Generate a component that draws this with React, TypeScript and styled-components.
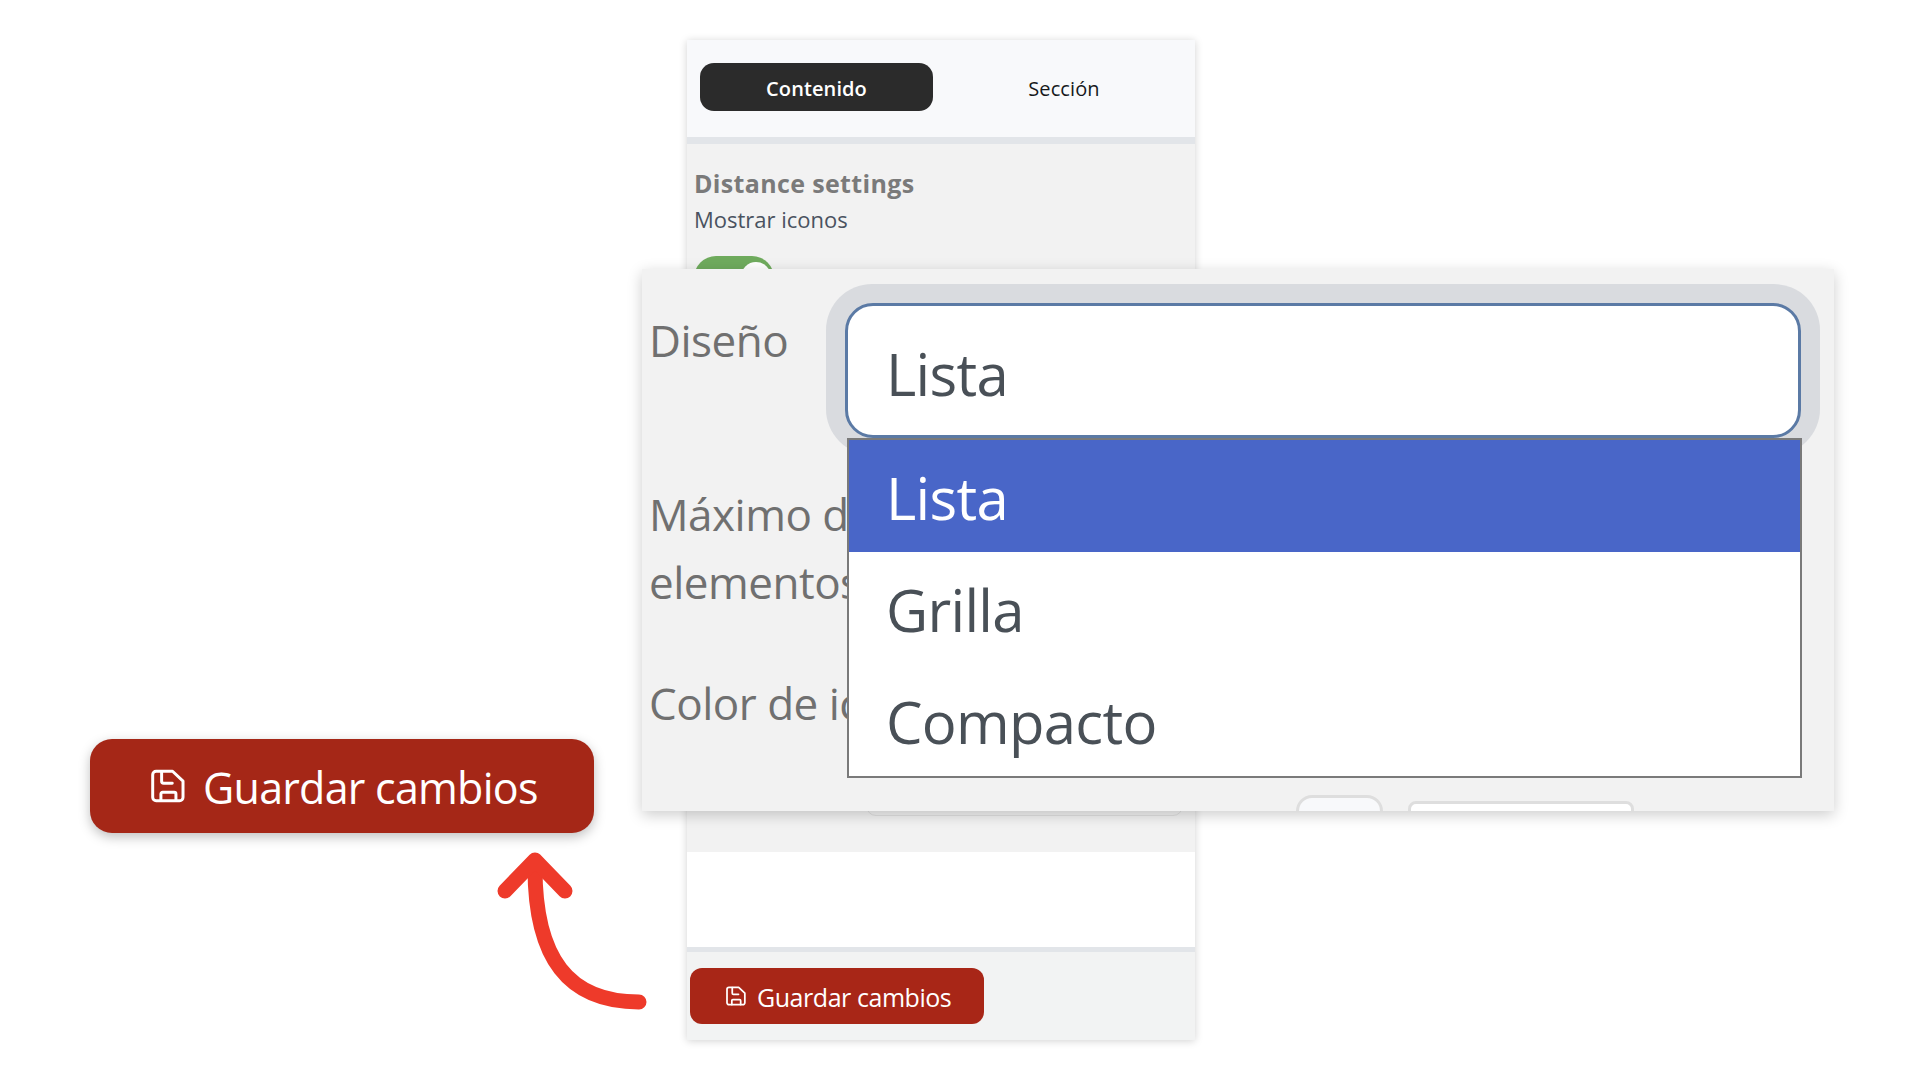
import React from 'react';
import styled, { createGlobalStyle } from 'styled-components';

const GlobalStyle = createGlobalStyle`
  html, body {
    margin: 0;
    background: #fff;
    font-family: "Open Sans", "Liberation Sans", sans-serif;
  }
`;

const Canvas = styled.div`
  position: relative;
  width: 1920px;
  height: 1080px;
  overflow: hidden;
  background: #fff;
`;

/* small sidebar at the back */
const BackPanel = styled.div`
  position: absolute;
  left: 687px;
  top: 40px;
  width: 508px;
  height: 1000px;
  display: flex;
  flex-direction: column;
  box-shadow: 0 1px 8px rgba(0, 0, 0, 0.18);
`;

const Tabs = styled.div`
  height: 104px;
  flex-shrink: 0;
  display: flex;
  align-items: center;
  padding: 0 0 3px 13px;
  box-sizing: border-box;
  background: #f8f9fb;
  border-bottom: 7px solid #e2e5e9;
`;

const Tab = styled.div<{ $active?: boolean }>`
  height: 48px;
  padding-top: 2px;
  box-sizing: border-box;
  display: flex;
  align-items: center;
  justify-content: center;
  flex: ${(p) => (p.$active ? '0 0 233px' : '1')};
  border-radius: 14px;
  font-size: 20px;
  font-weight: ${(p) => (p.$active ? 600 : 500)};
  letter-spacing: ${(p) => (p.$active ? '0.1px' : '0.1px')};
  color: ${(p) => (p.$active ? '#fff' : '#16191c')};
  background: ${(p) => (p.$active ? '#2b2b2b' : 'transparent')};
`;

const Body = styled.div`
  height: 708px;
  flex-shrink: 0;
  box-sizing: border-box;
  padding: 22px 7px 36px;
  display: flex;
  flex-direction: column;
  background: #f2f2f2;
`;

const Title = styled.div`
  font-size: 25px;
  line-height: 34px;
  font-weight: 700;
  letter-spacing: 0.35px;
  color: #7a7a7a;
`;

const Caption = styled.div`
  margin-top: 3px;
  font-size: 22px;
  line-height: 32px;
  letter-spacing: 0;
  color: #4a5260;
`;

const Toggle = styled.div`
  width: 80px;
  height: 44px;
  margin-top: 21px;
  padding: 6px 3px;
  box-sizing: border-box;
  display: flex;
  justify-content: flex-end;
  border-radius: 22px;
  background: #6fab5d;
`;

const Knob = styled.div`
  width: 30px;
  height: 30px;
  border-radius: 50%;
  background: #fff;
`;

const HiddenInput = styled.div`
  width: 317px;
  height: 40px;
  margin: auto 0 0 172px;
  box-sizing: border-box;
  border: 1px solid #e0e0e0;
  border-radius: 10px;
`;

const Blank = styled.div`
  height: 95px;
  flex-shrink: 0;
  background: #fff;
`;

const Footer = styled.div`
  flex: 1;
  display: flex;
  align-items: flex-start;
  padding: 16px 3px 0;
  background: #f2f3f3;
  border-top: 5px solid #e2e5e9;
`;

const SaveButton = styled.div<{ $big?: boolean }>`
  display: flex;
  align-items: center;
  box-sizing: border-box;
  color: #fff;
  background: ${(p) => (p.$big ? '#a52717' : '#a82617')};
  width: ${(p) => (p.$big ? '504px' : '294px')};
  height: ${(p) => (p.$big ? '94px' : '56px')};
  padding-left: ${(p) => (p.$big ? '61px' : '36px')};
  gap: ${(p) => (p.$big ? '18px' : '11px')};
  border-radius: ${(p) => (p.$big ? '22px' : '12px')};
  font-size: ${(p) => (p.$big ? '43px' : '25px')};
  letter-spacing: ${(p) => (p.$big ? '-0.75px' : '-0.45px')};
  box-shadow: ${(p) => (p.$big ? '0 4px 12px rgba(0, 0, 0, 0.25)' : 'none')};
`;

const ButtonLabel = styled.span`
  position: relative;
  top: 1px;
`;

const BigButtonSpot = styled.div`
  position: absolute;
  left: 90px;
  top: 739px;
`;

const Arrow = styled.svg`
  position: absolute;
  left: 0;
  top: 0;
  pointer-events: none;
`;

/* zoomed-in settings panel on top */
const FrontPanel = styled.div`
  position: absolute;
  left: 642px;
  top: 269px;
  width: 1192px;
  height: 542px;
  display: flex;
  overflow: hidden;
  background: #f2f2f2;
  box-shadow: 0 4px 14px rgba(0, 0, 0, 0.2);
`;

const LabelColumn = styled.div`
  width: 184px;
  flex-shrink: 0;
  padding: 37px 0 0 7px;
  box-sizing: border-box;
  white-space: nowrap;
`;

const FieldLabel = styled.div<{ $gap?: number }>`
  font-size: 44px;
  line-height: 68px;
  letter-spacing: -0.5px;
  color: #707070;
  margin-bottom: ${(p) => p.$gap ?? 0}px;
`;

const FieldColumn = styled.div`
  flex: 1;
  min-width: 0;
  position: relative;
  padding-top: 15px;
`;

const Ring = styled.div`
  width: 994px;
  height: 171px;
  box-sizing: border-box;
  padding: 19px;
  border-radius: 46px;
  background: #d9dbdf;
`;

const SelectBox = styled.div`
  position: relative;
  width: 956px;
  height: 135px;
  box-sizing: border-box;
  padding: 6px 0 0 38px;
  display: flex;
  align-items: center;
  border: 3px solid #5b7aa5;
  border-radius: 28px;
  background: #fff;
`;

const OptionText = styled.span`
  font-size: 58px;
  letter-spacing: -0.7px;
`;

const SelectValue = styled(OptionText)`
  color: #495057;
`;

const Dropdown = styled.div`
  position: absolute;
  left: -1px;
  right: -4px;
  top: 132px;
  border: 2px solid #7a7a7a;
  background: #fff;
`;

const Option = styled.div<{ $selected?: boolean }>`
  height: 112px;
  box-sizing: border-box;
  padding: 2px 0 0 37px;
  display: flex;
  align-items: center;
  color: ${(p) => (p.$selected ? '#fff' : '#495057')};
  background: ${(p) => (p.$selected ? '#4966c8' : '#fff')};
`;

const ChipRow = styled.div`
  display: flex;
  align-items: flex-start;
  margin: 340px 0 0 470px;
`;

const ChipSmall = styled.div`
  width: 87px;
  height: 40px;
  box-sizing: border-box;
  border: 3px solid #dedede;
  border-radius: 16px;
  background: #f8f9fb;
`;

const ChipWide = styled.div`
  width: 226px;
  height: 40px;
  margin: 6px 0 0 25px;
  box-sizing: border-box;
  border: 3px solid #dedede;
  border-radius: 8px;
  background: #fff;
`;

const SaveIcon = ({ size }: { size: number }) => (
  <svg width={size} height={size} viewBox="0 0 24 24" fill="none" stroke="currentColor" strokeWidth="2.1" strokeLinecap="round" strokeLinejoin="round">
    <path d="M3.6 1.6H15.2L22.6 8.6V20a2.4 2.4 0 0 1-2.4 2.4H3.6A2.4 2.4 0 0 1 1.2 20V4A2.4 2.4 0 0 1 3.6 1.6Z" />
    <path d="M7.5 1.8V8.6a1.4 1.4 0 0 0 1.4 1.4H15" />
    <path d="M7 22.2V17.6a1.2 1.2 0 0 1 1.2-1.2h8.2a1.2 1.2 0 0 1 1.2 1.2V22.2" />
  </svg>
);

const App = () => {
  return (
    <Canvas>
      <GlobalStyle />

      <BackPanel>
        <Tabs>
          <Tab $active>Contenido</Tab>
          <Tab>Sección</Tab>
        </Tabs>
        <Body>
          <Title>Distance settings</Title>
          <Caption>Mostrar iconos</Caption>
          <Toggle>
            <Knob />
          </Toggle>
          <HiddenInput />
        </Body>
        <Blank />
        <Footer>
          <SaveButton>
            <SaveIcon size={20} />
            <ButtonLabel>Guardar cambios</ButtonLabel>
          </SaveButton>
        </Footer>
      </BackPanel>

      <FrontPanel>
        <LabelColumn>
          <FieldLabel $gap={106}>Diseño</FieldLabel>
          <FieldLabel>Máximo de</FieldLabel>
          <FieldLabel $gap={53}>elementos</FieldLabel>
          <FieldLabel>Color de iconos</FieldLabel>
        </LabelColumn>
        <FieldColumn>
          <Ring>
            <SelectBox>
              <SelectValue>Lista</SelectValue>
              <Dropdown>
                <Option $selected><OptionText>Lista</OptionText></Option>
                <Option><OptionText>Grilla</OptionText></Option>
                <Option><OptionText>Compacto</OptionText></Option>
              </Dropdown>
            </SelectBox>
          </Ring>
          <ChipRow>
            <ChipSmall />
            <ChipWide />
          </ChipRow>
        </FieldColumn>
      </FrontPanel>

      <BigButtonSpot>
        <SaveButton $big>
          <SaveIcon size={34} />
          <ButtonLabel>Guardar cambios</ButtonLabel>
        </SaveButton>
      </BigButtonSpot>

      <Arrow width="1920" height="1080" viewBox="0 0 1920 1080" fill="none" stroke="#ee3a2a" strokeWidth="15" strokeLinecap="round" strokeLinejoin="round">
        <path d="M639 1002C568 1002 535 958 535 868" />
        <path d="M505 891L535 860L565 891" />
      </Arrow>
    </Canvas>
  );
};

export default App;
